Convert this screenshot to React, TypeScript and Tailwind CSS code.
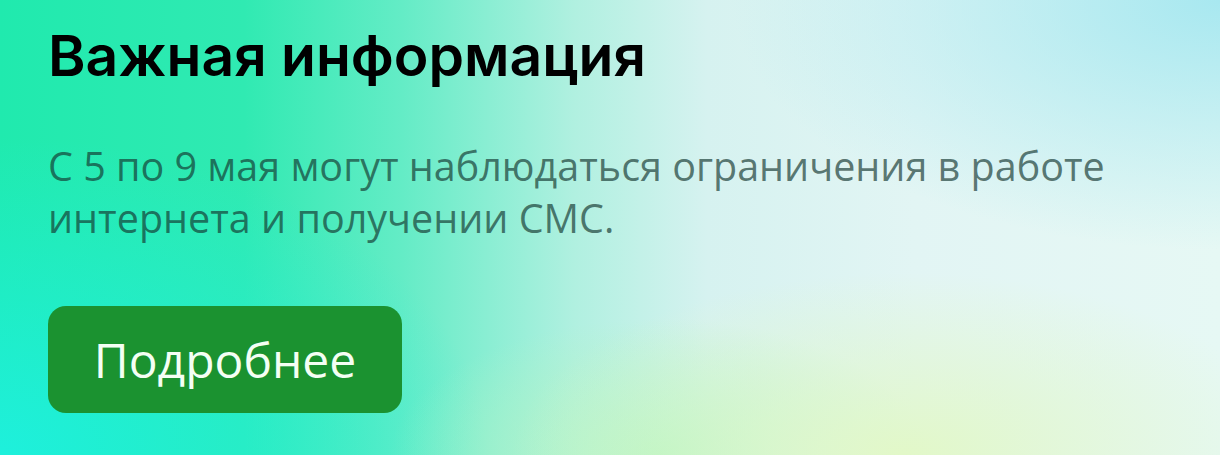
export default function App() {
  return (
    <div className="h-[455px] w-[1220px] overflow-hidden bg-[radial-gradient(ellipse_32%_40%_at_74%_100%,#e2f8c8_0%,rgba(226,248,200,0)_100%),radial-gradient(ellipse_22%_30%_at_54%_100%,#b4f4c4_0%,rgba(180,244,196,0)_100%),radial-gradient(ellipse_40%_55%_at_100%_0%,#a8e8f0_0%,rgba(168,232,240,0)_100%),radial-gradient(ellipse_40%_70%_at_0%_100%,#1ef0dc_0%,rgba(30,240,220,0)_100%),linear-gradient(90deg,#20eaae_0%,#30eab2_20%,#64ecc6_33%,#b0f0e0_47%,#d6f2f0_58%,#e2f5f4_75%,#e6f8f4_100%)] px-12 pt-[24px] font-['Open_Sans',sans-serif]">
      <h1 className="font-['Inter',sans-serif] text-[57px] leading-[64px] font-semibold text-black">
        Важная информация
      </h1>
      <p className="mt-[52px] text-[39.5px] leading-[52px] text-[rgba(20,55,48,0.68)]">
        С 5 по 9 мая могут наблюдаться ограничения в работе
        <br />
        интернета и получении СМС.
      </p>
      <button className="mt-[62px] flex h-[107px] w-[354px] items-center justify-center rounded-[18px] bg-[#1b9230] text-[48px] text-[#f4fff4]">
        Подробнее
      </button>
    </div>
  );
}
